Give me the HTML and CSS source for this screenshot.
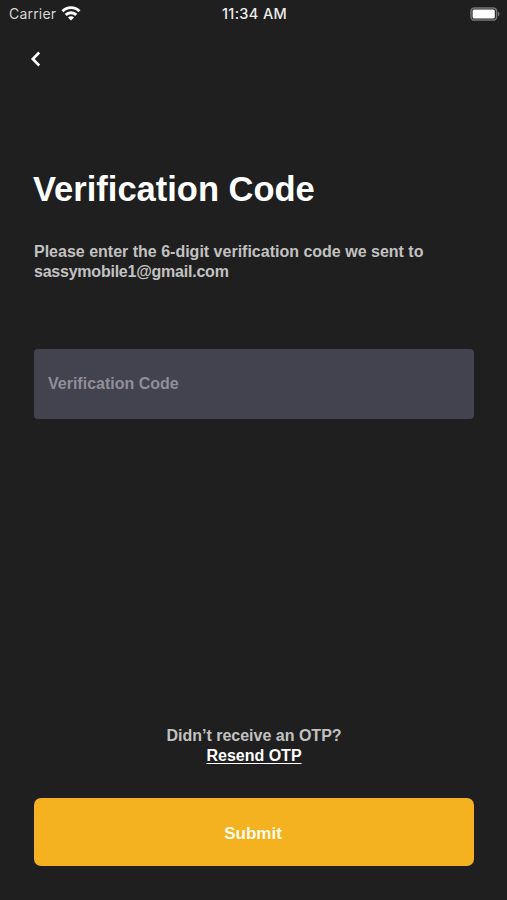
FILE: index.html
```html
<!DOCTYPE html>
<html lang="en">
<head>
  <meta charset="utf-8">
  <title>Verification Code</title>
  <link rel="stylesheet" href="styles.css">
</head>
<body>
  <div class="screen">
    <div class="status-bar">
      <div class="carrier">
        <span>Carrier</span>
        <svg class="wifi" width="20" height="15" viewBox="0 0 20 15" fill="none" stroke="#fff" stroke-width="2.9">
          <path d="M1.5 5.2a12 12 0 0 1 17 0"/>
          <path d="M4.7 8.9a7.5 7.5 0 0 1 10.6 0"/>
          <path d="M10 14.4 7 11.4a4.2 4.2 0 0 1 6 0z" fill="#fff" stroke="none"/>
        </svg>
      </div>
      <span class="time">11:34 AM</span>
      <svg class="battery" width="30" height="14" viewBox="0 0 30 14">
        <rect x="1" y="0.9" width="25.6" height="12.2" rx="3.4" fill="none" stroke="#77777a" stroke-width="1.5"/>
        <rect x="2.6" y="2.4" width="22.2" height="9.2" rx="1.6" fill="#fff"/>
        <path d="M28 4.8c2 .7 2 3.7 0 4.4z" fill="#77777a"/>
      </svg>
    </div>

    <button class="back" aria-label="Back">
      <svg width="12" height="16" viewBox="0 0 12 16" fill="none" stroke="#fff" stroke-width="2.6">
        <path d="M9.2 1.5 2.8 8l6.4 6.5"/>
      </svg>
    </button>

    <h1>Verification Code</h1>
    <p class="message">Please enter the 6-digit verification code we sent to <span class="email">sassymobile1@gmail.com</span></p>

    <input class="code-input" type="text" placeholder="Verification Code">

    <div class="footer">
      <p class="resend">Didn’t receive an OTP?<br><a href="#">Resend OTP</a></p>
      <button class="submit">Submit</button>
    </div>
  </div>
</body>
</html>
```

FILE: styles.css
```css
* {
  box-sizing: border-box;
}
body {
  margin: 0;
  background-color: #1f1f1f;
  font-family: "Liberation Sans", Arial, sans-serif;
  font-weight: bold;
  font-size: 16px;
  color: #fff;
}
.screen {
  display: flex;
  flex-direction: column;
  height: 900px;
  padding: 0 33px 34px 34px;
}
.status-bar {
  display: grid;
  grid-template-columns: 1fr auto 1fr;
  align-items: center;
  height: 27px;
  margin: 0 -26px 0 -25px;
  font-family: Inter, sans-serif;
  font-size: 14px;
}
.carrier {
  display: flex;
  align-items: center;
  gap: 5px;
  font-weight: 400;
  letter-spacing: 0.2px;
  color: #d6d6d6;
}
.time {
  font-size: 14.5px;
  font-weight: 500;
  letter-spacing: 0.35px;
  color: #ececec;
}
.battery {
  justify-self: end;
}
.back {
  display: flex;
  align-self: flex-start;
  margin: 24px 0 0 -4px;
  padding: 0;
  border: none;
  background: none;
}
h1 {
  margin: 101px 0 0 -1px;
  font-size: 34.5px;
  line-height: 42px;
}
.message {
  margin: 32px 0 0;
  line-height: 19.5px;
  color: #c2c2c2;
}
.email {
  letter-spacing: -0.23px;
}
.code-input {
  height: 70px;
  margin-top: 67.5px;
  padding: 0 14px;
  border: none;
  border-radius: 4px;
  background-color: #43424f;
  color: #fff;
  font: inherit;
}
.code-input::placeholder {
  color: #8f8e99;
}
.footer {
  display: flex;
  flex-direction: column;
  margin-top: auto;
}
.resend {
  margin: 0 0 32px;
  text-align: center;
  line-height: 20px;
  color: #c2c2c2;
}
.resend a {
  color: #fff;
  text-decoration-thickness: 1px;
  text-underline-offset: 2px;
}
.submit {
  height: 68px;
  padding: 4px 8px 1px 6px;
  border: none;
  border-radius: 7px;
  background-color: #f4b120;
  color: #fffbe8;
  font: inherit;
  font-size: 17px;
}
```
